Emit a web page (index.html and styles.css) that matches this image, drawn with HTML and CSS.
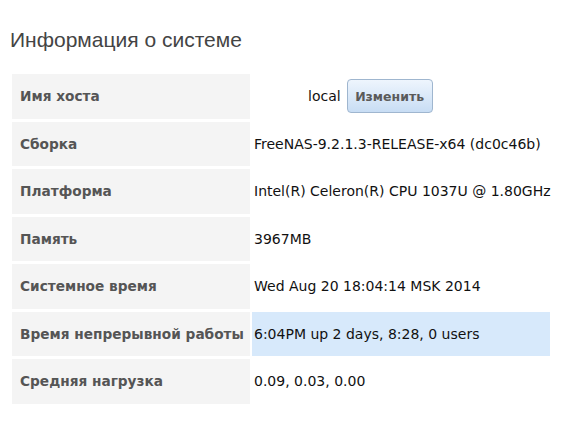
FILE: index.html
```html
<!DOCTYPE html>
<html>
<head>
<meta charset="utf-8">
<link rel="stylesheet" href="styles.css">
</head>
<body>
<h1 class="title">Информация о системе</h1>
<table class="info">
  <colgroup><col class="c-label"><col class="c-value"></colgroup>
  <tr><th>Имя хоста</th><td class="host"><span class="host-name">local</span><button class="btn">Изменить</button></td></tr>
  <tr><th>Сборка</th><td>FreeNAS-9.2.1.3-RELEASE-x64 (dc0c46b)</td></tr>
  <tr><th>Платформа</th><td>Intel(R) Celeron(R) CPU 1037U @ 1.80GHz</td></tr>
  <tr><th>Память</th><td>3967MB</td></tr>
  <tr><th>Системное время</th><td>Wed Aug 20 18:04:14 MSK 2014</td></tr>
  <tr><th>Время непрерывной работы</th><td class="hl">6:04PM up 2 days, 8:28, 0 users</td></tr>
  <tr><th>Средняя нагрузка</th><td>0.09, 0.03, 0.00</td></tr>
</table>
</body>
</html>
```
FILE: styles.css
```css
html, body { margin: 0; padding: 0; background: #fff; }
body { padding: 0 0 0 10px; }
.title {
  font-family: "Liberation Sans", Arial, sans-serif;
  font-weight: normal;
  font-size: 21px;
  color: #444;
  margin: 0;
  padding-top: 28px;
  height: 43px;
  line-height: 24px;
}
.info {
  border-collapse: separate;
  border-spacing: 2px 3px;
  table-layout: fixed;
  width: 542px;
  font-family: "DejaVu Sans", Verdana, sans-serif;
  font-size: 14px;
  color: #111;
}
.c-label { width: 238px; }
.c-value { width: 298px; }
.info th, .info td { height: 44.5px; padding: 0; vertical-align: middle; box-sizing: border-box; white-space: nowrap; }
.info th {
  background: #f4f4f4;
  color: #555;
  font-weight: bold;
  font-size: 13.7px;
  text-align: left;
  padding-left: 8px;
}
.info td { padding-left: 2px; }
.info td.hl { background: #d7e9fb; }
.info td.host { padding-left: 56px; }
.host-name { display: inline-block; vertical-align: middle; }
.btn {
  display: inline-block;
  vertical-align: middle;
  margin-left: 6px;
  width: 86px;
  height: 34px;
  border: 1px solid #9fb6cf;
  border-radius: 4px;
  background: linear-gradient(#eef5fd, #c8ddf4);
  font-family: "DejaVu Sans", Verdana, sans-serif;
  font-weight: bold;
  font-size: 12.5px;
  color: #5a5a5a;
  padding: 0;
}
```
